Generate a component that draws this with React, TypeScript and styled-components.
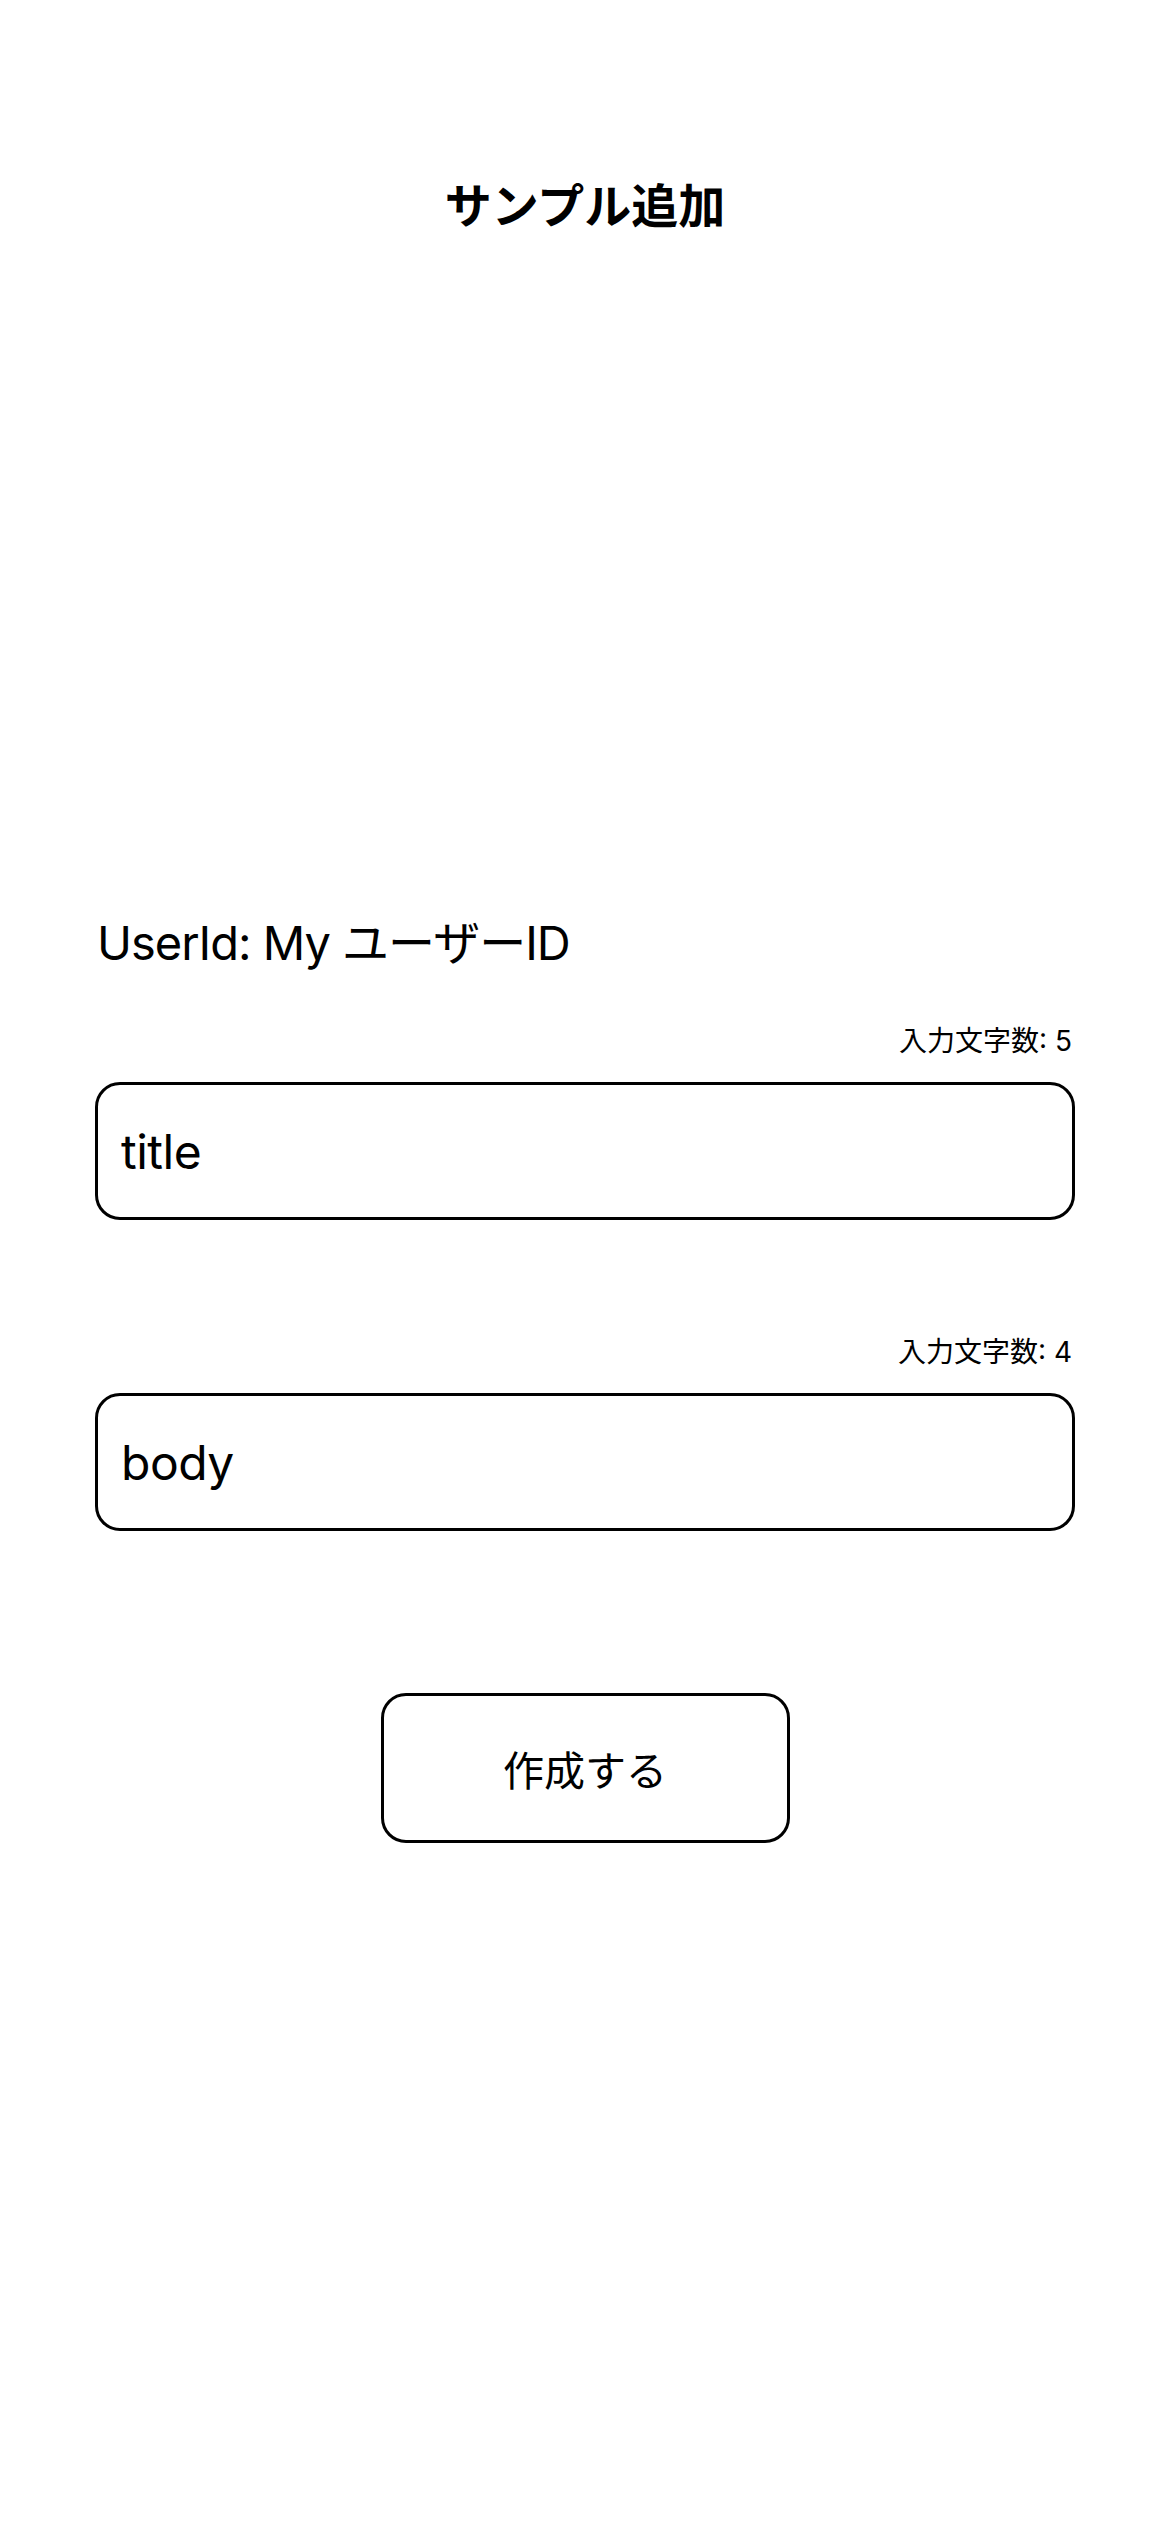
import { useState } from "react";
import styled, { createGlobalStyle } from "styled-components";

const GlobalStyle = createGlobalStyle`
    * {
        box-sizing: border-box;
    }
    body {
        margin: 0;
        background-color: #ffffff;
        color: #000000;
        font-family: Inter, "Noto Sans CJK JP", sans-serif;
    }
`;

const Page = styled.main`
    min-height: 2532px;
    padding: 176px 95px 0;
    display: flex;
    flex-direction: column;
`;

const Title = styled.h1`
    margin: 0;
    text-align: center;
    font-size: 47px;
    line-height: 60px;
    font-weight: 700;
`;

const UserLine = styled.p`
    margin: 676px 0 0;
    padding-left: 2px;
    font-size: 47px;
    line-height: 62px;
    letter-spacing: -1px;
    font-weight: 400;
`;

const Field = styled.div<{ $gap: number }>`
    margin-top: ${(props) => props.$gap}px;
    display: flex;
    flex-direction: column;
    gap: 21px;
`;

const Counter = styled.span`
    align-self: flex-end;
    padding-right: 3px;
    font-size: 28px;
    line-height: 40px;
`;

const TextBox = styled.input`
    width: 100%;
    height: 138px;
    padding: 0 23px;
    border: 3px solid #000000;
    border-radius: 25px;
    background: #ffffff;
    color: #000000;
    font-family: Inter, "Noto Sans CJK JP", sans-serif;
    font-size: 48px;
    letter-spacing: -0.5px;
    outline: none;
`;

const SubmitButton = styled.button`
    align-self: center;
    margin-top: 162px;
    width: 409px;
    height: 150px;
    border: 3px solid #000000;
    border-radius: 25px;
    background: #ffffff;
    color: #000000;
    font-family: Inter, "Noto Sans CJK JP", sans-serif;
    font-size: 41px;
    font-weight: 400;
    cursor: pointer;
`;

function App() {
    const [title, setTitle] = useState("title");
    const [body, setBody] = useState("body");

    return (
        <>
            <GlobalStyle />
            <Page>
                <Title>サンプル追加</Title>
                <UserLine>UserId: My ユーザーID</UserLine>
                <Field $gap={47}>
                    <Counter>入力文字数: {title.length}</Counter>
                    <TextBox value={title} onChange={(e) => setTitle(e.target.value)} />
                </Field>
                <Field $gap={112}>
                    <Counter>入力文字数: {body.length}</Counter>
                    <TextBox value={body} onChange={(e) => setBody(e.target.value)} />
                </Field>
                <SubmitButton type="button">作成する</SubmitButton>
            </Page>
        </>
    );
}

export default App;
